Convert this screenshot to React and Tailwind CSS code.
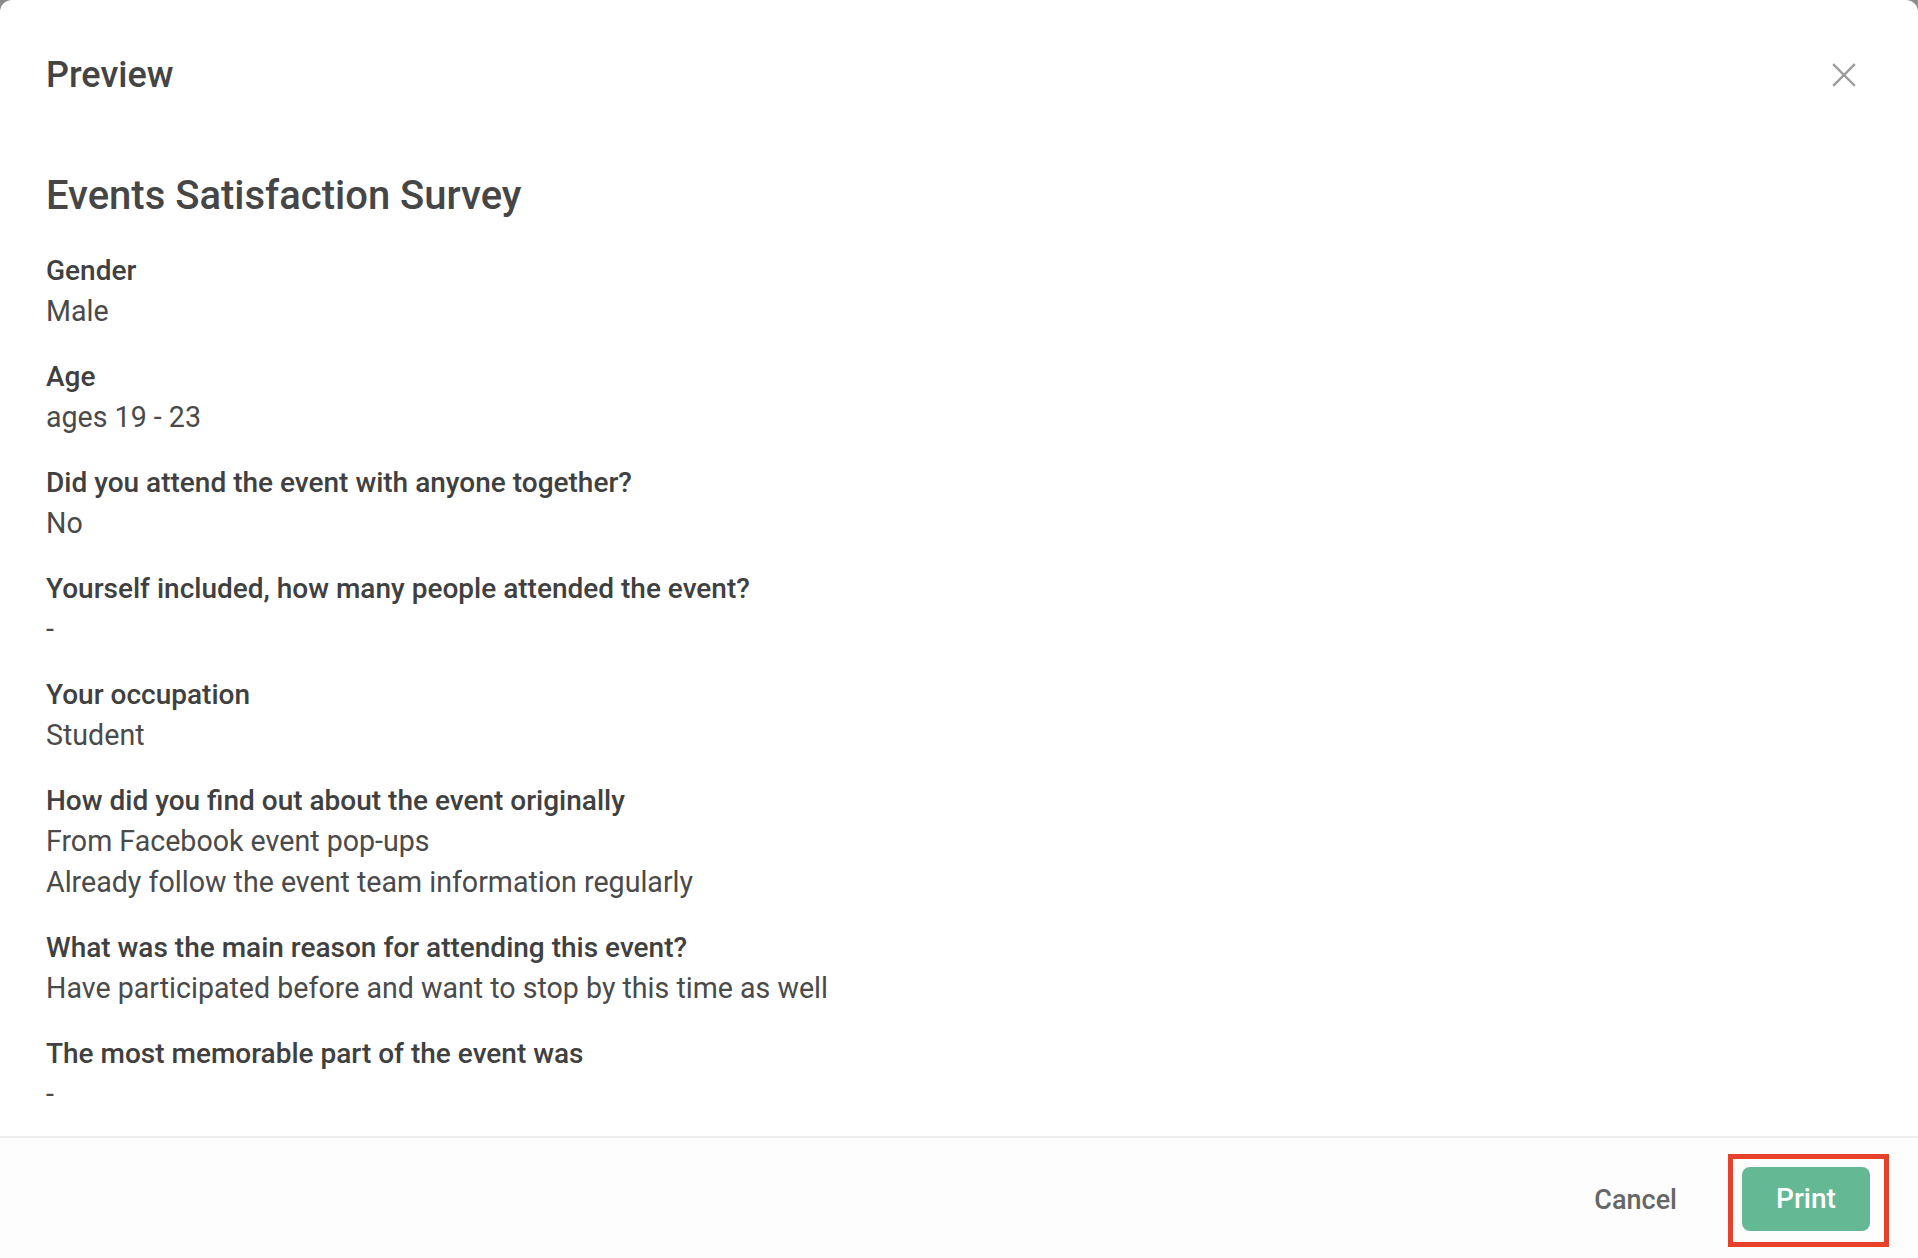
import React from "react";

const answers = [
  { question: "Gender", values: ["Male"] },
  { question: "Age", values: ["ages 19 - 23"] },
  { question: "Did you attend the event with anyone together?", values: ["No"] },
  { question: "Yourself included, how many people attended the event?", values: ["-"] },
  { question: "Your occupation", values: ["Student"] },
  {
    question: "How did you find out about the event originally",
    values: ["From Facebook event pop-ups", "Already follow the event team information regularly"],
  },
  {
    question: "What was the main reason for attending this event?",
    values: ["Have participated before and want to stop by this time as well"],
  },
  { question: "The most memorable part of the event was", values: ["-"] },
];

function CloseIcon() {
  return (
    <svg width="24" height="24" viewBox="0 0 24 24" fill="none" aria-hidden="true">
      <path d="M2 2L22 22M22 2L2 22" stroke="#9b9b9b" strokeWidth="2.4" strokeLinecap="square" />
    </svg>
  );
}

export default function App() {
  return (
    <div
      className="min-h-screen bg-[#8c8c8c]"
      style={{ fontFamily: "Roboto, 'Noto Sans', 'Liberation Sans', sans-serif" }}
    >
      <div className="flex h-[1258px] flex-col overflow-hidden rounded-t-[12px] bg-white">
        {/* header */}
        <div className="flex items-center justify-between pt-[48px] pl-[46px] pr-[62px]">
          <h1 className="text-[36px] font-medium leading-[54px] text-[#444444]">Preview</h1>
          <button type="button" aria-label="Close" className="flex h-[24px] w-[24px] items-center justify-center">
            <CloseIcon />
          </button>
        </div>

        {/* body */}
        <div className="flex-1 px-[46px] pt-[64px] pb-[21px]">
          <h2 className="mb-[24px] text-[40px] font-medium leading-[60px] text-[#464646]">
            Events Satisfaction Survey
          </h2>
          <div className="flex flex-col gap-[24px]">
            {answers.map((item) => (
              <div key={item.question}>
                <p className="text-[28px] font-medium leading-[41px] text-[#404040]">{item.question}</p>
                {item.values.map((value) => (
                  <p key={value} className="text-[28.6px] leading-[41px] text-[#4a4a4a]">
                    {value}
                  </p>
                ))}
              </div>
            ))}
          </div>
        </div>

        {/* footer */}
        <div className="flex h-[124px] items-center justify-end border-t-2 border-[#eeeeee] bg-[#fdfdfd] pt-[4px] pr-[29px]">
          <button type="button" className="mr-[51px] text-[27px] font-medium text-[#666666]">
            Cancel
          </button>
          <div className="border-[5px] border-[#e5412b] pt-[8px] pr-[14px] pb-[11px] pl-[9px]">
            <button
              type="button"
              className="flex h-[64px] w-[128px] items-center justify-center rounded-[8px] bg-[#64b893] text-[28px] font-medium text-white"
            >
              Print
            </button>
          </div>
        </div>
      </div>
    </div>
  );
}
